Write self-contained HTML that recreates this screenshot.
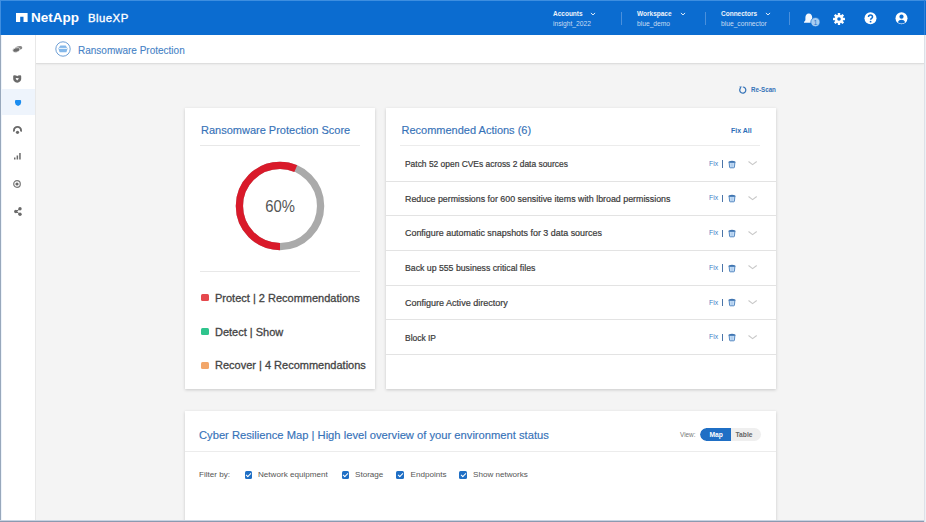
<!DOCTYPE html>
<html><head><meta charset="utf-8">
<style>
*{box-sizing:border-box;margin:0;padding:0}
html,body{width:926px;height:522px;overflow:hidden}
body{position:relative;background:#f4f4f4;font-family:"Liberation Sans",sans-serif;color:#333}
.abs{position:absolute}
svg{position:absolute;overflow:visible}
#hdr{left:0;top:0;width:926px;height:35px;background:#0b6cd0;border-top:1px solid #3d8ee0}
#side{left:0;top:35px;width:36px;height:487px;background:#fff;border-right:1px solid #e8e8e8}
#sub{left:36px;top:35px;width:888px;height:28px;background:#fff;border-bottom:none}
.card{position:absolute;background:#fff;box-shadow:0 1px 3px rgba(0,0,0,.18)}
.blue{color:#3672b8;-webkit-text-stroke:0.15px #3672b8}
.t{position:absolute;white-space:nowrap;line-height:1}
.hl{font-size:6.5px;font-weight:bold;color:#eef4fb}
.hv{font-size:6.7px;color:#c9ddf3}
.hdiv{position:absolute;top:11px;width:1px;height:13px;background:#4a90dc}
.row{position:absolute;left:0;width:390px;height:1px;background:#e3e3e3}
.rt{position:absolute;left:19px;font-size:9px;color:#3a3a3a;white-space:nowrap;line-height:1;-webkit-text-stroke:0.2px #3a3a3a}
.fix{position:absolute;left:322.8px;font-size:7.6px;color:#3d80c8;transform:scaleX(0.9);transform-origin:0 0;white-space:nowrap;line-height:1}
.lg{position:absolute;left:30px;font-size:11px;color:#444;white-space:nowrap;line-height:1;-webkit-text-stroke:0.3px #444}
.sq{position:absolute;left:16px;width:8.3px;height:7.7px;border-radius:1.5px;margin-top:-0.5px}
.cb{position:absolute;top:60.3px;width:7.5px;height:7.5px;background:#1f6fc5;border-radius:1.5px}
.cb:after{content:"";position:absolute;left:2.6px;top:1.2px;width:2px;height:4px;border:solid #fff;border-width:0 1.1px 1.1px 0;transform:rotate(45deg)}
.ft{position:absolute;top:60px;font-size:8.1px;color:#555;white-space:nowrap;line-height:1}
</style></head>
<body>
<svg width="0" height="0" style="position:absolute"><defs>
<g id="trash"><path d="M1.1 2.4H6.9L6.4 7.3Q6.3 7.8 5.8 7.8H2.2Q1.7 7.8 1.6 7.3Z" fill="#c2dbf4" stroke="#4a80bd" stroke-width="0.9"/><path d="M0.2 2.5Q0.6 0.9 4 0.8Q7.4 0.9 7.8 2.5Z" fill="#3f74b0"/><path d="M4 3.4V6.8" stroke="#8fb7e3" stroke-width="0.6"/></g>
</defs></svg>
<div id="hdr" class="abs">
  <svg style="left:16px;top:12.3px" width="12" height="10" viewBox="0 0 12 10"><path d="M0 0H11.6V9H7.5V3.8H4.2V9H0Z" fill="#fff"/></svg>
  <div class="t" style="left:31px;top:10px;font-size:13.5px;font-weight:bold;color:#fff">NetApp</div>
  <div class="t" style="left:88px;top:12px;font-size:11.4px;letter-spacing:0.45px;color:#fff;-webkit-text-stroke:0.35px #fff">BlueXP</div>

  <div class="t hl" style="left:553px;top:10px">Accounts</div>
  <svg style="left:590px;top:11px" width="6" height="4" viewBox="0 0 6 4"><path d="M0.9 1L3 2.9L5.1 1" stroke="#eef4fb" stroke-width="0.95" fill="none"/></svg>
  <div class="t hv" style="left:553px;top:20px">insight_2022</div>
  <div class="hdiv" style="left:621px"></div>

  <div class="t hl" style="left:637px;top:10px">Workspace</div>
  <svg style="left:680px;top:11px" width="6" height="4" viewBox="0 0 6 4"><path d="M0.9 1L3 2.9L5.1 1" stroke="#eef4fb" stroke-width="0.95" fill="none"/></svg>
  <div class="t hv" style="left:637px;top:20px">blue_demo</div>
  <div class="hdiv" style="left:705px"></div>

  <div class="t hl" style="left:721px;top:10px">Connectors</div>
  <svg style="left:765px;top:11px" width="6" height="4" viewBox="0 0 6 4"><path d="M0.9 1L3 2.9L5.1 1" stroke="#eef4fb" stroke-width="0.95" fill="none"/></svg>
  <div class="t hv" style="left:721px;top:20px">blue_connector</div>
  <div class="hdiv" style="left:789px"></div>

  <!-- bell -->
  <svg style="left:803px;top:11px" width="18" height="16" viewBox="0 0 18 16">
    <path d="M5.8 1.6C3.6 1.6 2.4 3.4 2.4 5.6V8.2L1 10V10.8H10.6V10L9.2 8.2V5.6C9.2 3.4 8 1.6 5.8 1.6Z" fill="#f4f8fd"/>
    <circle cx="12.4" cy="10.1" r="4.6" fill="#a7cdf2" stroke="#0b6cd0" stroke-width="0.7"/>
    <text x="12.4" y="12.6" font-size="7" text-anchor="middle" fill="#2a78c8" font-family="Liberation Sans">1</text>
  </svg>
  <!-- gear -->
  <svg style="left:833px;top:11.6px" width="12" height="12" viewBox="0 0 12 12">
    <g fill="#fff">
      <circle cx="6" cy="6" r="4.2"/>
      <rect x="4.8" y="0" width="2.4" height="12" rx="0.4"/>
      <rect x="0" y="4.8" width="12" height="2.4" rx="0.4"/>
      <rect x="4.8" y="0" width="2.4" height="12" rx="0.4" transform="rotate(45 6 6)"/>
      <rect x="4.8" y="0" width="2.4" height="12" rx="0.4" transform="rotate(-45 6 6)"/>
    </g>
    <circle cx="6" cy="6" r="1.8" fill="#0b6cd0"/>
  </svg>
  <!-- question -->
  <svg style="left:863.5px;top:11.2px" width="13" height="13" viewBox="0 0 13 13">
    <circle cx="6.5" cy="6.3" r="6" fill="#fff"/>
    <path d="M4.5 5C4.5 3.8 5.4 3.1 6.5 3.1C7.6 3.1 8.5 3.8 8.5 4.9C8.5 6.3 6.6 6.4 6.6 7.8" stroke="#0b6cd0" stroke-width="1.5" fill="none"/>
    <circle cx="6.6" cy="9.7" r="0.9" fill="#0b6cd0"/>
  </svg>
  <!-- user -->
  <svg style="left:894.5px;top:11.2px" width="13" height="13" viewBox="0 0 13 13">
    <circle cx="6.5" cy="6.3" r="6" fill="#fff"/>
    <circle cx="6.5" cy="4.7" r="2.1" fill="#0b6cd0"/>
    <path d="M2.9 10.2C3.6 8.4 5 7.7 6.5 7.7C8 7.7 9.4 8.4 10.1 10.2C9.1 11.1 7.9 11.6 6.5 11.6C5.1 11.6 3.9 11.1 2.9 10.2Z" fill="#0b6cd0"/>
  </svg>
</div>

<div id="side" class="abs">
  <div class="abs" style="left:1px;top:54px;width:34px;height:26px;background:#eef4fc"></div>
  <!-- icon1 cloud -->
  <svg style="left:12px;top:9.5px" width="11" height="8" viewBox="0 0 11 8"><ellipse cx="6.6" cy="3.2" rx="3.7" ry="2" transform="rotate(-15 6.6 3.2)" fill="#888"/><ellipse cx="4.3" cy="5" rx="3.7" ry="2.2" transform="rotate(-15 4.3 5)" fill="#6a6a6a" stroke="#fff" stroke-width="0.6"/></svg>
  <!-- icon2 shield heart -->
  <svg style="left:13px;top:40px" width="9" height="8" viewBox="0 0 9 8"><path d="M0.2 1.3Q0.2 0.3 1.3 0.3L3.2 0.4L4.2 1.3L5.2 0.4L7.1 0.3Q8.2 0.3 8.2 1.3V3.9Q8.2 6.4 4.2 7.8Q0.2 6.4 0.2 3.9Z" fill="#6a6a6a"/><path d="M4.2 5.4L2.9 4.1Q2.4 3.4 3.1 3Q3.7 2.7 4.2 3.3Q4.7 2.7 5.3 3Q6 3.4 5.5 4.1Z" fill="#fff"/></svg>
  <!-- icon3 blue shield -->
  <svg style="left:14.5px;top:64.5px" width="7" height="7" viewBox="0 0 7 7"><path d="M0 1Q0 0 1 0H5.1Q6.1 0 6.1 1V2.8Q6.1 5 3.05 6.1Q0 5 0 2.8Z" fill="#1a8cf0"/></svg>
  <!-- icon4 -->
  <svg style="left:13px;top:90.5px" width="9" height="8" viewBox="0 0 9 8"><path d="M4.5 0C2 0 0 1.9 0 4.3C0 5 0.2 5.6 0.5 6.1L2.1 5.1C2 4.9 1.9 4.6 1.9 4.3C1.9 2.9 3.1 1.8 4.5 1.8C5.9 1.8 7.1 2.9 7.1 4.3C7.1 4.6 7 4.9 6.9 5.1L8.5 6.1C8.8 5.6 9 5 9 4.3C9 1.9 7 0 4.5 0Z" fill="#6a6a6a"/><circle cx="4.5" cy="6.3" r="1.6" fill="#6a6a6a"/></svg>
  <!-- icon5 bars -->
  <svg style="left:14px;top:118px" width="7" height="7" viewBox="0 0 7 7"><rect x="0" y="4.5" width="1.5" height="2" fill="#6a6a6a"/><rect x="2.6" y="2.5" width="1.5" height="4" fill="#6a6a6a"/><rect x="5.2" y="0" width="1.5" height="6.5" fill="#6a6a6a"/></svg>
  <!-- icon6 -->
  <svg style="left:13px;top:144.5px" width="8" height="8" viewBox="0 0 8 8"><circle cx="4" cy="4" r="3.3" fill="none" stroke="#777" stroke-width="1.2"/><circle cx="4" cy="4" r="1.6" fill="#6a6a6a"/></svg>
  <!-- icon7 share -->
  <svg style="left:13.5px;top:171.5px" width="8" height="9" viewBox="0 0 8 9"><path d="M6 1.8L2 4.5L6 7.2" stroke="#6a6a6a" stroke-width="1" fill="none"/><circle cx="6" cy="1.8" r="1.7" fill="#6a6a6a"/><circle cx="1.8" cy="4.5" r="1.7" fill="#6a6a6a"/><circle cx="6" cy="7.2" r="1.7" fill="#6a6a6a"/></svg>
</div>

<div id="sub" class="abs">
  <svg style="left:18.5px;top:6px" width="16" height="16" viewBox="0 0 16 16">
    <circle cx="8" cy="8" r="7.2" fill="none" stroke="#6fa0d6" stroke-width="1"/>
    <path d="M3.4 7.6L5.3 4.6H10.7L12.6 7.6L11.4 11.2H4.6Z" fill="#84b8ea"/>
    <path d="M3.8 7.4H12.2" stroke="#fff" stroke-width="0.9"/>
  </svg>
  <div class="t" style="left:42px;top:10.5px;font-size:10px;color:#4682c6;-webkit-text-stroke:0.1px #4682c6">Ransomware Protection</div>
</div>

<div class="abs" style="left:36px;top:63px;width:888px;height:1px;background:#dedede;box-shadow:0 1px 1.5px rgba(0,0,0,.05)"></div>
<!-- Re-Scan -->
<svg style="left:738.6px;top:85.8px" width="8" height="8" viewBox="0 0 8 8"><path d="M1.5 2A3.05 3.05 0 1 0 3.8 1" stroke="#3573b8" stroke-width="1.25" fill="none"/><path d="M0.4 0.6L2.9 0.5L1.4 2.8Z" fill="#3573b8"/></svg>
<div class="t" style="left:750.6px;top:86px;font-size:7.7px;font-weight:bold;color:#3573b8;transform:scaleX(0.81);transform-origin:0 0">Re-Scan</div>

<!-- card1 -->
<div class="card" style="left:185px;top:108px;width:190px;height:281px">
  <div class="t blue" style="left:16px;top:17px;font-size:11px">Ransomware Protection Score</div>
  <div class="abs" style="left:15px;top:37px;width:160px;height:1px;background:#e8e8e8"></div>
  <svg style="left:50px;top:53px" width="90" height="90" viewBox="0 0 90 90">
    <circle cx="45" cy="45" r="40.6" fill="none" stroke="#aaaaaa" stroke-width="7.3"/>
    <circle cx="45" cy="45" r="40.6" fill="none" stroke="#d91a2a" stroke-width="7.3" stroke-dasharray="143.5 300" transform="rotate(90 45 45)"/>
  </svg>
  <div class="t" style="left:0;width:190px;text-align:center;top:90.3px;font-size:16.3px;color:#555;transform:scaleX(0.91)">60%</div>
  <div class="abs" style="left:15px;top:163px;width:160px;height:1px;background:#e8e8e8"></div>
  <div class="sq" style="top:186px;background:#e5484d"></div>
  <div class="lg" style="top:184.5px">Protect | 2 Recommendations</div>
  <div class="sq" style="top:220px;background:#2fc48d"></div>
  <div class="lg" style="top:218.5px">Detect | Show</div>
  <div class="sq" style="top:254px;background:#f2a66a"></div>
  <div class="lg" style="top:252px">Recover | 4 Recommendations</div>
</div>

<!-- card2 -->
<div class="card" style="left:386px;top:108px;width:390px;height:281px">
  <div class="t blue" style="left:15.5px;top:17px;font-size:11px">Recommended Actions (6)</div>
  <div class="t" style="left:345px;top:18.5px;font-size:7.8px;font-weight:bold;color:#2d6fb8;transform:scaleX(0.89);transform-origin:0 0">Fix All</div>
  <div class="abs" style="left:14px;top:37px;width:360px;height:1px;background:#ececec"></div>

  <div class="rt" style="top:52px;font-size:8.43px">Patch 52 open CVEs across 2 data sources</div>
  <div class="row" style="top:72.5px"></div>
  <div class="rt" style="top:86.7px;font-size:8.85px">Reduce permissions for 600 sensitive items with lbroad permissions</div>
  <div class="row" style="top:107px"></div>
  <div class="rt" style="top:121.4px;font-size:8.93px">Configure automatic snapshots for 3 data sources</div>
  <div class="row" style="top:141.7px"></div>
  <div class="rt" style="top:156.1px;font-size:8.73px">Back up 555 business critical files</div>
  <div class="row" style="top:176.5px"></div>
  <div class="rt" style="top:190.8px;font-size:9.03px">Configure Active directory</div>
  <div class="row" style="top:211px"></div>
  <div class="rt" style="top:225.5px;font-size:8.45px">Block IP</div>
  <div class="row" style="top:245.7px"></div>
  <div class="fix" style="top:51.6px">Fix</div><div class="abs" style="left:336px;opacity:.85;top:52.0px;width:1px;height:7.5px;background:#2b5d9a"></div>
  <svg style="left:341.6px;top:51.5px" width="8" height="8" viewBox="0 0 8 8"><use href="#trash"/></svg>
  <svg style="left:361.7px;top:53.2px" width="10" height="5" viewBox="0 0 10 5"><path d="M0.5 0.5L4.6 3.6L8.7 0.5" stroke="#c8c8c8" stroke-width="1.1" fill="none"/></svg>
  <div class="fix" style="top:86.3px">Fix</div><div class="abs" style="left:336px;opacity:.85;top:86.7px;width:1px;height:7.5px;background:#2b5d9a"></div>
  <svg style="left:341.6px;top:86.2px" width="8" height="8" viewBox="0 0 8 8"><use href="#trash"/></svg>
  <svg style="left:361.7px;top:87.9px" width="10" height="5" viewBox="0 0 10 5"><path d="M0.5 0.5L4.6 3.6L8.7 0.5" stroke="#c8c8c8" stroke-width="1.1" fill="none"/></svg>
  <div class="fix" style="top:121.1px">Fix</div><div class="abs" style="left:336px;opacity:.85;top:121.5px;width:1px;height:7.5px;background:#2b5d9a"></div>
  <svg style="left:341.6px;top:121.0px" width="8" height="8" viewBox="0 0 8 8"><use href="#trash"/></svg>
  <svg style="left:361.7px;top:122.7px" width="10" height="5" viewBox="0 0 10 5"><path d="M0.5 0.5L4.6 3.6L8.7 0.5" stroke="#c8c8c8" stroke-width="1.1" fill="none"/></svg>
  <div class="fix" style="top:155.8px">Fix</div><div class="abs" style="left:336px;opacity:.85;top:156.2px;width:1px;height:7.5px;background:#2b5d9a"></div>
  <svg style="left:341.6px;top:155.7px" width="8" height="8" viewBox="0 0 8 8"><use href="#trash"/></svg>
  <svg style="left:361.7px;top:157.4px" width="10" height="5" viewBox="0 0 10 5"><path d="M0.5 0.5L4.6 3.6L8.7 0.5" stroke="#c8c8c8" stroke-width="1.1" fill="none"/></svg>
  <div class="fix" style="top:190.5px">Fix</div><div class="abs" style="left:336px;opacity:.85;top:190.9px;width:1px;height:7.5px;background:#2b5d9a"></div>
  <svg style="left:341.6px;top:190.4px" width="8" height="8" viewBox="0 0 8 8"><use href="#trash"/></svg>
  <svg style="left:361.7px;top:192.1px" width="10" height="5" viewBox="0 0 10 5"><path d="M0.5 0.5L4.6 3.6L8.7 0.5" stroke="#c8c8c8" stroke-width="1.1" fill="none"/></svg>
  <div class="fix" style="top:225.2px">Fix</div><div class="abs" style="left:336px;opacity:.85;top:225.6px;width:1px;height:7.5px;background:#2b5d9a"></div>
  <svg style="left:341.6px;top:225.1px" width="8" height="8" viewBox="0 0 8 8"><use href="#trash"/></svg>
  <svg style="left:361.7px;top:226.8px" width="10" height="5" viewBox="0 0 10 5"><path d="M0.5 0.5L4.6 3.6L8.7 0.5" stroke="#c8c8c8" stroke-width="1.1" fill="none"/></svg>
</div>

<!-- card3 -->
<div class="card" style="left:185px;top:411px;width:591px;height:120px">
  <div class="t blue" style="left:14px;top:18.7px;font-size:11.2px">Cyber Resilience Map | High level overview of your environment status</div>
  <div class="t" style="left:495px;top:21px;font-size:6.4px;color:#777">View:</div>
  <div class="abs" style="left:515px;top:17px;width:61px;height:13px;border-radius:6.5px;background:#efefef;overflow:hidden">
    <div class="abs" style="left:0;top:0;width:30.5px;height:13px;background:#1f6fc5;border-radius:6.5px 0 0 6.5px"></div>
    <div class="t" style="left:9.5px;top:3.6px;font-size:6.7px;font-weight:bold;color:#fff">Map</div>
    <div class="t" style="left:35.5px;top:3.6px;font-size:6.7px;font-weight:bold;color:#666">Table</div>
  </div>
  <div class="abs" style="left:0;top:40px;width:591px;height:1px;background:#ececec"></div>
  <div class="ft" style="left:14px">Filter by:</div>
  <div class="cb" style="left:59.5px"></div><div class="ft" style="left:73px">Network equipment</div>
  <div class="cb" style="left:156.5px"></div><div class="ft" style="left:170px">Storage</div>
  <div class="cb" style="left:211.2px"></div><div class="ft" style="left:225.5px">Endpoints</div>
  <div class="cb" style="left:274.3px"></div><div class="ft" style="left:288px">Show networks</div>
</div>

<!-- frame borders -->
<div class="abs" style="left:0;top:35px;width:1px;height:487px;background:#98a8bc"></div><div class="abs" style="left:1px;top:35px;width:1px;height:487px;background:#eef4fb"></div><div class="abs" style="left:0;top:0;width:1px;height:35px;background:#3f8ee0"></div>
<div class="abs" style="left:0;top:520px;width:926px;height:1px;background:#c9d3e2"></div><div class="abs" style="left:0;top:521px;width:926px;height:1px;background:#8b9ab0"></div>
<div class="abs" style="left:924px;top:35px;width:1px;height:487px;background:#dde1e8"></div><div class="abs" style="left:924px;top:0;width:1px;height:35px;background:#2f80d8"></div><div class="abs" style="left:925px;top:35px;width:1px;height:487px;background:#eef1f5"></div>
</body></html>
